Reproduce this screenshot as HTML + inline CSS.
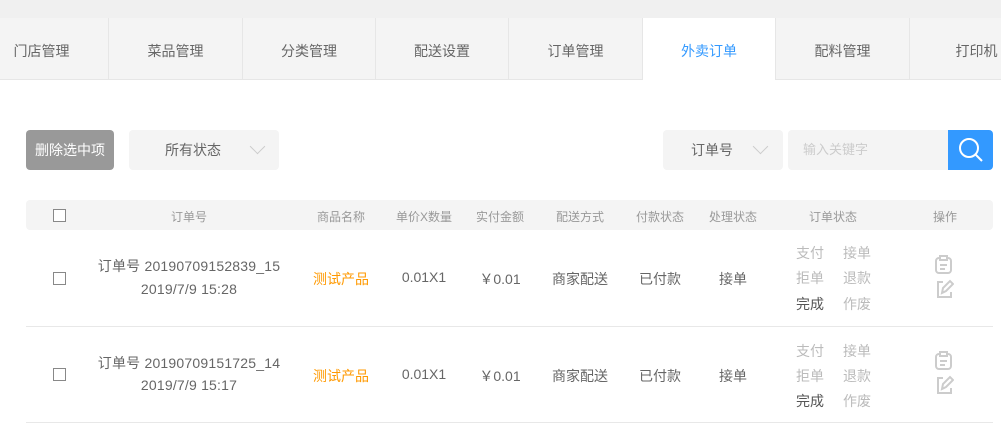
<!DOCTYPE html>
<html><head><meta charset="utf-8"><style>
*{margin:0;padding:0;box-sizing:border-box}
body{width:1001px;height:433px;overflow:hidden;background:#fff;font-family:"Liberation Sans","Noto Sans CJK SC",sans-serif;color:#666;font-size:14px;position:relative}
.top{position:absolute;left:0;top:0;width:1001px;height:18px;background:#f0f0f0}
.tabs{position:absolute;left:0;top:18px;width:1001px;height:62px;background:#f4f4f4;border-bottom:1px solid #e6e6e6}
.tab{position:absolute;top:0;height:61px;line-height:66px;text-align:center;border-right:1px solid #e6e6e6;color:#666;font-size:14px}
.tab.on{background:#fff;color:#3399ff;height:62px}
.abs{position:absolute}
.btn{left:26px;top:130px;width:88px;height:40px;background:#999;color:#fff;border-radius:4px;line-height:40px;text-align:center}
.sel{background:#f4f4f4;border-radius:4px;height:40px;line-height:40px;top:130px}
.chev{position:absolute;top:11px;width:11px;height:11px;border-right:1.5px solid #ccc;border-bottom:1.5px solid #ccc;transform:rotate(45deg)}
.th{left:26px;top:200px;width:967px;height:30px;background:#f4f4f4;border-radius:4px;font-size:12px;color:#999}
.c{position:absolute;transform:translateX(-50%);white-space:nowrap}
.cb{position:absolute;width:13px;height:13px;border:1px solid #888;background:#fff}
.row{position:absolute;left:26px;width:967px;border-bottom:1px solid #e8e8e8}
.st{position:absolute;font-size:14px;color:#bbb}
.on2{letter-spacing:0.2px}
</style></head><body>
<div class="top"></div>
<div class="tabs">
<div class="tab" style="left:-25px;width:134px">门店管理</div>
<div class="tab" style="left:109px;width:134px">菜品管理</div>
<div class="tab" style="left:243px;width:133px">分类管理</div>
<div class="tab" style="left:376px;width:133px">配送设置</div>
<div class="tab" style="left:509px;width:134px">订单管理</div>
<div class="tab on" style="left:643px;width:133px">外卖订单</div>
<div class="tab" style="left:776px;width:134px">配料管理</div>
<div class="tab" style="left:910px;width:134px">打印机</div>
</div>
<div class="abs btn">删除选中项</div>
<div class="abs sel" style="left:129px;width:150px"><span style="position:absolute;left:36px">所有状态</span><div class="chev" style="left:123px"></div></div>
<div class="abs sel" style="left:663px;width:120px"><span style="position:absolute;left:28px">订单号</span><div class="chev" style="left:92px"></div></div>
<div class="abs sel" style="left:788px;width:165px;color:#ccc;font-size:13px"><span style="position:absolute;left:15px">输入关键字</span></div>
<div class="abs" style="left:948px;top:130px;width:45px;height:40px;background:#3399ff;border-radius:0 4px 4px 0">
<svg width="45" height="40"><circle cx="21" cy="18" r="9" fill="none" stroke="#fff" stroke-width="2"/><line x1="27.5" y1="24.5" x2="34" y2="31" stroke="#fff" stroke-width="2"/></svg></div>
<div class="abs th">
<div class="cb" style="left:27px;top:9px"></div>
<div class="c" style="left:163px;top:8px">订单号</div>
<div class="c" style="left:315px;top:8px">商品名称</div>
<div class="c" style="left:398px;top:8px">单价X数量</div>
<div class="c" style="left:474px;top:8px">实付金额</div>
<div class="c" style="left:554px;top:8px">配送方式</div>
<div class="c" style="left:634px;top:8px">付款状态</div>
<div class="c" style="left:707px;top:8px">处理状态</div>
<div class="c" style="left:807px;top:8px">订单状态</div>
<div class="c" style="left:919px;top:8px">操作</div>
</div>
<div class="row" style="top:230px;height:97px">
<div class="cb" style="left:27px;top:42px"></div>
<div class="c on2" style="left:163px;top:26px">订单号 20190709152839_15</div>
<div class="c on2" style="left:163px;top:51px">2019/7/9 15:28</div>
<div class="c" style="left:315px;top:39px;color:#f90">测试产品</div>
<div class="c" style="left:398px;top:39px">0.01X1</div>
<div class="c" style="left:474px;top:39px">￥0.01</div>
<div class="c" style="left:554px;top:39px">商家配送</div>
<div class="c" style="left:634px;top:39px">已付款</div>
<div class="c" style="left:707px;top:39px">接单</div>
<div class="st" style="left:770px;top:13px">支付</div><div class="st" style="left:817px;top:13px">接单</div>
<div class="st" style="left:770px;top:38px">拒单</div><div class="st" style="left:817px;top:38px">退款</div>
<div class="st" style="left:770px;top:64px;color:#555">完成</div><div class="st" style="left:817px;top:64px">作废</div>
<svg class="abs" style="left:908px;top:25px" width="20" height="45"><rect x="2" y="3" width="15" height="15" rx="3" fill="none" stroke="#ccc" stroke-width="2"/><rect x="6" y="1" width="7" height="4" fill="#fff" stroke="#ccc" stroke-width="2"/><line x1="6" y1="10" x2="13" y2="10" stroke="#ccc" stroke-width="2"/><line x1="6" y1="14" x2="11" y2="14" stroke="#ccc" stroke-width="2"/><path d="M9 27 H4 V42 H17 V37" fill="none" stroke="#ccc" stroke-width="2"/><path d="M8 38 L9 33 L16 26 L19 29 L12 36 Z" fill="none" stroke="#ccc" stroke-width="2"/></svg>
</div>
<div class="row" style="top:327px;height:96px">
<div class="cb" style="left:27px;top:41px"></div>
<div class="c on2" style="left:163px;top:26px">订单号 20190709151725_14</div>
<div class="c on2" style="left:163px;top:50px">2019/7/9 15:17</div>
<div class="c" style="left:315px;top:39px;color:#f90">测试产品</div>
<div class="c" style="left:398px;top:39px">0.01X1</div>
<div class="c" style="left:474px;top:39px">￥0.01</div>
<div class="c" style="left:554px;top:39px">商家配送</div>
<div class="c" style="left:634px;top:39px">已付款</div>
<div class="c" style="left:707px;top:39px">接单</div>
<div class="st" style="left:770px;top:14px">支付</div><div class="st" style="left:817px;top:14px">接单</div>
<div class="st" style="left:770px;top:39px">拒单</div><div class="st" style="left:817px;top:39px">退款</div>
<div class="st" style="left:770px;top:64px;color:#555">完成</div><div class="st" style="left:817px;top:64px">作废</div>
<svg class="abs" style="left:908px;top:24px" width="20" height="45"><rect x="2" y="3" width="15" height="15" rx="3" fill="none" stroke="#ccc" stroke-width="2"/><rect x="6" y="1" width="7" height="4" fill="#fff" stroke="#ccc" stroke-width="2"/><line x1="6" y1="10" x2="13" y2="10" stroke="#ccc" stroke-width="2"/><line x1="6" y1="14" x2="11" y2="14" stroke="#ccc" stroke-width="2"/><path d="M9 27 H4 V42 H17 V37" fill="none" stroke="#ccc" stroke-width="2"/><path d="M8 38 L9 33 L16 26 L19 29 L12 36 Z" fill="none" stroke="#ccc" stroke-width="2"/></svg>
</div>
</body></html>
